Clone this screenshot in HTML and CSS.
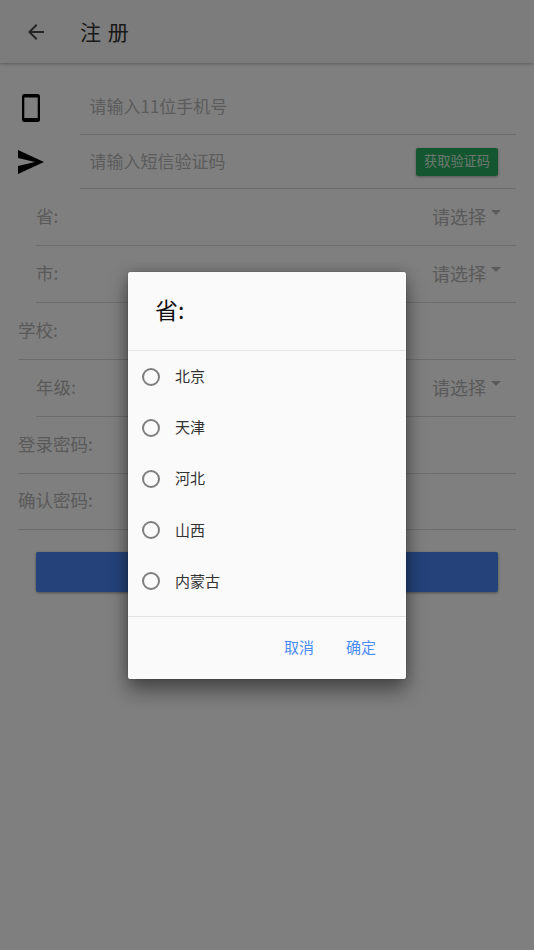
FILE: index.html
```html
<!DOCTYPE html>
<html lang="zh">
<head>
<meta charset="utf-8">
<title>注册</title>
<link rel="stylesheet" href="styles.css">
</head>
<body>
<div class="page">
  <header class="appbar">
    <svg class="back" viewBox="0 0 24 24"><path d="M20 11H7.830l5.590-5.590L12 4l-8 8 8 8 1.410-1.410L7.830 13H20v-2z"/></svg>
    <h1 class="title">注 册</h1>
  </header>
  <main class="form">
    <div class="icon-row first">
      <svg class="phone" viewBox="0 0 18 28"><path fill-rule="evenodd" d="M2.500 0h13A2.500 2.500 0 0 1 18 2.500v23a2.500 2.500 0 0 1-2.500 2.500h-13A2.500 2.500 0 0 1 0 25.500v-23A2.500 2.500 0 0 1 2.500 0zM2.300 3.500v20.500h13.400V3.500z"/></svg>
      <div class="field"><span class="hint">请输入11位手机号</span></div>
    </div>
    <div class="icon-row second">
      <svg class="send" viewBox="0 0 26 24"><path d="M0 0l26 12L0 24v-8l17-4-17-4z"/></svg>
      <div class="field"><span class="hint">请输入短信验证码</span><span class="code-btn">获取验证码</span></div>
    </div>
    <div class="row indent"><span class="label">省:</span><span class="select">请选择<i class="caret"></i></span></div>
    <div class="row indent"><span class="label">市:</span><span class="select">请选择<i class="caret"></i></span></div>
    <div class="row"><span class="label">学校:</span></div>
    <div class="row indent"><span class="label">年级:</span><span class="select">请选择<i class="caret"></i></span></div>
    <div class="row"><span class="label">登录密码:</span></div>
    <div class="row last"><span class="label">确认密码:</span></div>
    <div class="submit"></div>
  </main>
</div>
<div class="scrim">
  <section class="dialog">
    <h2 class="dialog-title">省:</h2>
    <ul class="options">
      <li class="option"><i class="radio"></i>北京</li>
      <li class="option"><i class="radio"></i>天津</li>
      <li class="option"><i class="radio"></i>河北</li>
      <li class="option"><i class="radio"></i>山西</li>
      <li class="option"><i class="radio"></i>内蒙古</li>
    </ul>
    <div class="actions"><span class="action">取消</span><span class="action">确定</span></div>
  </section>
</div>
</body>
</html>
```
FILE: styles.css
```css
* { box-sizing: border-box; }
html, body { margin: 0; padding: 0; }
body {
  width: 534px;
  height: 950px;
  position: relative;
  overflow: hidden;
  background: #fff;
  font-family: "Noto Sans CJK SC", "Noto Sans", sans-serif;
}
.page { height: 950px; background: #fff; }
.appbar {
  height: 63px;
  background: #f8f8f8;
  box-shadow: 0 1px 3px rgba(0,0,0,.3);
  display: flex;
  align-items: center;
  position: relative;
}
.back { width: 24px; height: 24px; margin-left: 24px; fill: #4a4a4a; }
.title {
  margin: 0 0 0 32px;
  font-size: 21px;
  font-weight: 400;
  letter-spacing: 1px;
  color: #333;
  line-height: 1;
}
.form { padding: 17px 18px 0; }
.icon-row { display: flex; align-items: center; }
.first { height: 55px; }
.second { height: 54px; }
.phone { width: 18px; height: 28px; margin-left: 4px; margin-right: 40px; flex: none; }
.send { width: 26px; height: 24px; margin-right: 36px; flex: none; }
.field {
  flex: 1;
  height: 100%;
  padding: 0 18px 0 9.500px;
  display: flex;
  align-items: center;
  justify-content: space-between;
  border-bottom: 1px solid #d8d8d8;
}
.hint { margin-bottom: 3px; font-size: 17px; color: #b8b8b8; }
.code-btn {
  width: 82px;
  height: 28px;
  margin-top: 1px;
  padding-bottom: 3px;
  background: #27ad5f;
  color: #d8efe0;
  font-size: 13.200px;
  border-radius: 2px;
  display: flex;
  align-items: center;
  justify-content: center;
  box-shadow: 0 1px 3px rgba(0,0,0,.35);
}
.row {
  height: 57px;
  padding-bottom: 4px;
  display: flex;
  align-items: center;
  justify-content: space-between;
  border-bottom: 1px solid #d8d8d8;
  color: #b4b4b4;
  font-size: 17.500px;
}
.row.last { height: 56px; }
.indent { margin-left: 18px; }
.select {
  padding: 1px 15px 0 0;
  display: flex;
  align-items: center;
  font-size: 18px;
  color: #b4b4b4;
}
.caret {
  width: 0;
  height: 0;
  margin: -7px 0 0 5px;
  border-left: 5.500px solid transparent;
  border-right: 5.500px solid transparent;
  border-top: 5.500px solid #b4b4b4;
}
.submit {
  height: 40px;
  margin: 22px 18px 0;
  background: #4a86f5;
  border-radius: 2px;
  box-shadow: 0 1px 3px rgba(0,0,0,.4);
}
.scrim {
  position: absolute;
  inset: 0;
  background: rgba(0,0,0,.5);
}
.dialog {
  position: absolute;
  left: 128px;
  top: 272px;
  width: 278px;
  height: 407px;
  background: #fafafa;
  border-radius: 2px;
  box-shadow: 0 0 1px rgba(0,0,0,.5), 0 12px 20px rgba(0,0,0,.4), 0 0 14px rgba(0,0,0,.22);
  display: flex;
  flex-direction: column;
}
.dialog-title {
  height: 79px;
  margin: 0;
  padding: 0 0 4px 27px;
  font-size: 23px;
  font-weight: 400;
  color: #111;
  display: flex;
  align-items: center;
  border-bottom: 1px solid #e6e6e6;
}
.options {
  list-style: none;
  margin: 0;
  padding: 0;
  height: 266px;
  border-bottom: 1px solid #e2e2e2;
}
.option {
  height: 51.200px;
  padding-bottom: 2px;
  display: flex;
  align-items: center;
  font-size: 15px;
  color: #333;
}
.radio {
  width: 18px;
  height: 18px;
  margin: 2px 15px 0 14px;
  border: 2px solid #7f7f7f;
  border-radius: 50%;
}
.actions {
  flex: 1;
  padding: 0 30px 4px 0;
  display: flex;
  justify-content: flex-end;
  align-items: center;
  gap: 32px;
}
.action { font-size: 15px; color: #4a8cf7; }
```
